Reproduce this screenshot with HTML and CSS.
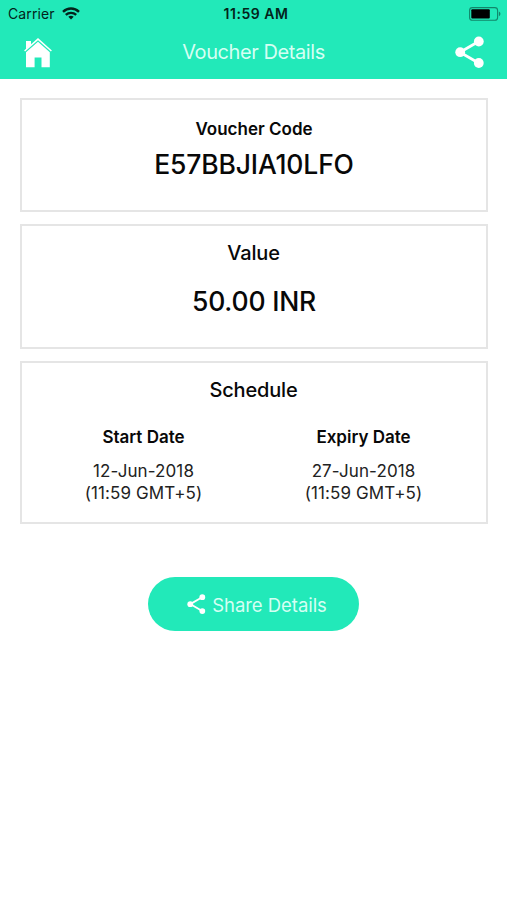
FILE: index.html
```html
<!DOCTYPE html>
<html lang="en">
<head>
<meta charset="utf-8">
<title>Voucher Details</title>
<link rel="stylesheet" href="styles.css">
</head>
<body>
<header class="header">
  <div class="status">
    <div class="status-left">
      <span class="carrier">Carrier</span>
      <svg class="wifi" width="18" height="13" viewBox="0 0 18 13" fill="none" stroke="#03241b" stroke-width="2.4">
        <path d="M1 4.8C5.5.4 12.5.4 17 4.8"/>
        <path d="M3.8 7.9c3-2.7 7.4-2.7 10.4 0"/>
        <path d="M6.3 9.8c1.6-1.4 3.8-1.4 5.4 0L9 12.6z" fill="#03241b" stroke="none"/>
      </svg>
    </div>
    <span class="time">11:59 AM</span>
    <svg class="battery" width="32" height="14" viewBox="0 0 32 14">
      <rect x=".6" y=".6" width="28" height="12.6" rx="2.8" fill="none" stroke="#12866a" stroke-width="1.1"/>
      <rect x="2.3" y="2.3" width="18.5" height="9.2" rx="1" fill="#000"/>
      <path d="M29.9 4.6c2 .8 2 3.8 0 4.6z" fill="#12866a"/>
    </svg>
  </div>
  <div class="nav">
    <svg class="home" width="28" height="30" viewBox="0 0 28 30" fill="#fff">
      <path d="M2 3h5v4L2 11.5z"/>
      <path d="M.6 13 14 1.1 27.4 13" fill="none" stroke="#fff" stroke-width="1.5"/>
      <path d="M14 3.8 25.8 14.3V29.3H17.5V19.4H10.6V29.3H2V14.3z"/>
    </svg>
    <h1 class="title">Voucher Details</h1>
    <svg class="share" width="30" height="32" viewBox="0 0 30 32">
      <path d="M24 5.3 5 16.2 24 27.2" fill="none" stroke="#fff" stroke-width="2.8"/>
      <g fill="#fff"><circle cx="23.8" cy="5.5" r="4.9"/><circle cx="5.2" cy="16.2" r="4.9"/><circle cx="23.8" cy="27" r="4.9"/></g>
    </svg>
  </div>
</header>
<main class="main">
  <section class="card code-card">
    <h2 class="label">Voucher Code</h2>
    <p class="big code">E57BBJIA10LFO</p>
  </section>
  <section class="card value-card">
    <h2 class="heading value">Value</h2>
    <p class="big amount">50.00 INR</p>
  </section>
  <section class="card schedule-card">
    <h2 class="heading schedule">Schedule</h2>
    <div class="dates">
      <div class="date">
        <h3 class="label">Start Date</h3>
        <p class="when"><span class="day">12-Jun-2018</span><br><span class="hour">(11:59 GMT+5)</span></p>
      </div>
      <div class="date">
        <h3 class="label">Expiry Date</h3>
        <p class="when"><span class="day">27-Jun-2018</span><br><span class="hour">(11:59 GMT+5)</span></p>
      </div>
    </div>
  </section>
  <button class="button">
    <svg class="button-icon" width="19" height="20" viewBox="0 0 30 32">
      <path d="M24 5.3 5 16.2 24 27.2" fill="none" stroke="#fff" stroke-width="2.8"/>
      <g fill="#fff"><circle cx="24.3" cy="5" r="4.6"/><circle cx="5" cy="16.2" r="4.6"/><circle cx="24.3" cy="27.2" r="4.6"/></g>
    </svg>
    <span class="button-text">Share Details</span>
  </button>
</main>
</body>
</html>
```
FILE: styles.css
```css
* { box-sizing: border-box; margin: 0; padding: 0; }
body {
  width: 507px;
  height: 900px;
  background: #fff;
  color: #080808;
  font-family: Inter, "Liberation Sans", sans-serif;
}
svg { display: block; flex: none; }
.header { height: 79px; background: #22e9b9; }
.status {
  height: 27px;
  display: grid;
  grid-template-columns: 1fr auto 1fr;
  align-items: center;
  padding: 0 6px 0 8px;
  color: #03241b;
}
.status-left { display: flex; align-items: center; gap: 7px; }
.carrier { font-size: 14px; letter-spacing: 0.1px; }
.time { font-size: 14px; font-weight: 600; letter-spacing: 0.55px; padding-left: 3px; }
.battery { justify-self: end; }
.nav {
  height: 50px;
  display: grid;
  grid-template-columns: 1fr auto 1fr;
  align-items: center;
  padding: 0 22px 0 24px;
}
.home { margin-top: 2px; }
.title { font-size: 20px; font-weight: 400; color: #d5fff3; line-height: 24px; letter-spacing: -0.42px; padding-right: 2px; }
.share { justify-self: end; }
.main {
  padding: 19px 19px 0 20px;
  display: flex;
  flex-direction: column;
  gap: 12px;
}
.card {
  border: 2px solid #e5e5e5;
  display: flex;
  flex-direction: column;
  align-items: center;
}
.code-card { height: 114px; padding-top: 19px; }
.value-card { height: 125px; padding-top: 15px; }
.schedule-card { height: 163px; padding-top: 15px; }
.label { font-size: 17px; line-height: 20px; font-weight: 600; }
.heading { font-size: 20px; line-height: 24px; font-weight: 500; letter-spacing: -0.15px; padding-right: 1px; }
.big { font-size: 26.5px; line-height: 32px; font-weight: 450; }
.code { margin-top: 9px; letter-spacing: -0.15px; }
.amount { margin-top: 20px; letter-spacing: -0.2px; }
.dates {
  display: grid;
  grid-template-columns: 220px 220px;
  margin-top: 25px;
  padding-right: 1px;
  text-align: center;
}
.when { margin-top: 13px; font-size: 17px; line-height: 22px; color: #222; letter-spacing: 0.1px; }
.button {
  align-self: center;
  margin-top: 41px;
  margin-right: 1px;
  width: 211px;
  height: 54px;
  border: 0;
  border-radius: 27px;
  background: #22e9b9;
  color: #d5fff3;
  font: 400 18.5px/24px Inter, "Liberation Sans", sans-serif;
  letter-spacing: -0.05px;
  padding: 2px 0 0 7px;
  display: flex;
  align-items: center;
  justify-content: center;
  gap: 6px;
}
.button-icon { margin-bottom: 2px; }
```
